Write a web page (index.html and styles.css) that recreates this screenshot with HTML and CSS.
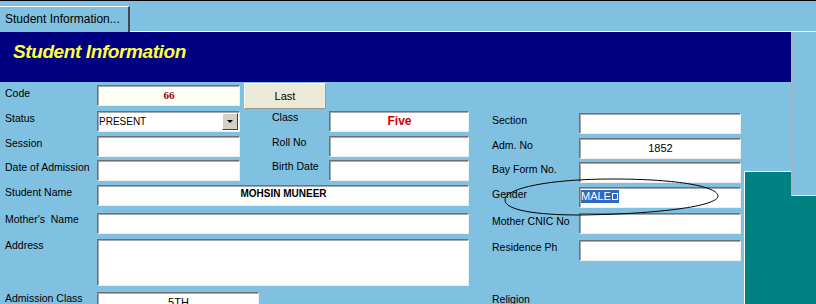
FILE: index.html
```html
<!DOCTYPE html>
<html lang="en">
<head>
    <meta charset="UTF-8">
    <title>Student Information</title>
    <link rel="stylesheet" href="styles.css">
</head>
<body>
    <div class="tabbar">
        <div class="tab">Student Information...</div>
        <div class="tabline"></div>
    </div>

    <div class="page">
        <div class="header">
            <h1>Student Information</h1>
        </div>

        <div class="form">
            <!-- row 1 -->
            <div class="lbl first">Code</div>
            <div class="field code">66</div>
            <button class="btn">Last</button>

            <!-- row 2 -->
            <div class="lbl">Status</div>
            <div class="field combo">PRESENT<span class="drop"></span></div>
            <div class="lbl mid">Class</div>
            <div class="field c5 class-val">Five</div>
            <div class="lbl c7 right">Section</div>
            <div class="field c8 right"></div>

            <!-- row 3 -->
            <div class="lbl">Session</div>
            <div class="field"></div>
            <div class="lbl mid">Roll No</div>
            <div class="field c5"></div>
            <div class="lbl c7 right">Adm. No</div>
            <div class="field c8 right num">1852</div>

            <!-- row 4 -->
            <div class="lbl">Date of Admission</div>
            <div class="field"></div>
            <div class="lbl mid">Birth Date</div>
            <div class="field c5"></div>
            <div class="lbl c7 right">Bay Form No.</div>
            <div class="field c8 right"></div>

            <!-- row 5 -->
            <div class="lbl">Student Name</div>
            <div class="field wide name">MOHSIN MUNEER</div>
            <div class="lbl c7 right">Gender</div>
            <div class="field c8 right gender"><span class="sel">MALE<span class="cr"></span></span></div>

            <!-- row 6 -->
            <div class="lbl">Mother's &nbsp;Name</div>
            <div class="field wide low"></div>
            <div class="lbl c7 right">Mother CNIC No</div>
            <div class="field c8 low"></div>

            <!-- row 7 -->
            <div class="lbl">Address</div>
            <div class="field wide address"></div>
            <div class="lbl c7 right">Residence Ph</div>
            <div class="field c8 right"></div>

            <!-- row 8 -->
            <div class="lbl">Admission Class</div>
            <div class="field adm-class num">5TH</div>
            <div class="lbl c7">Religion</div>
        </div>
    </div>

    <div class="teal"></div>
    <div class="strip"></div>

    <svg class="circle" width="224" height="46" viewBox="0 0 224 46">
        <path d="M5,26 C5,14 50,5 113,5 C180,5 218,13 218,22 C218,32 160,40 80,41 C35,41 5,36 5,26 Z"
              fill="none" stroke="#000" stroke-width="1"/>
    </svg>
</body>
</html>
```

FILE: styles.css
```css
body {
    margin: 0;
    width: 816px;
    height: 304px;
    overflow: hidden;
    position: relative;
    background-color: #80c0e0;
    font-family: "Liberation Sans", Arial, sans-serif;
}
.tabbar {
    display: flex;
    align-items: flex-end;
    height: 31px;
    border-top: 1px solid #000;
}
.tab {
    box-sizing: border-box;
    width: 130px;
    height: 26px;
    padding: 5px 0 0 5px;
    border-top: 1px solid #fff;
    border-right: 2px solid #404850;
    font-size: 12px;
    line-height: 14px;
    color: #000;
}
.tabline {
    flex: 1;
    height: 1px;
    background-color: #fff;
}
.header {
    box-sizing: border-box;
    width: 791px;
    height: 50px;
    padding: 9px 0 0 13px;
    background-color: #000080;
}
h1 {
    margin: 0;
    font-size: 19px;
    line-height: 22px;
    font-weight: bold;
    font-style: italic;
    letter-spacing: -0.4px;
    color: #ffff3c;
}
.form {
    display: grid;
    grid-template-columns: 92px 143px 4px 85px 140px 23px 87px 162px;
    grid-template-rows: 28px 25px 24px 25px 27px 26px 53px auto;
    padding-left: 5px;
    align-items: start;
}
.lbl {
    grid-column: 1;
    margin-top: 2px;
    font-size: 10.5px;
    line-height: 12px;
    color: #000;
    white-space: nowrap;
}
.lbl.first {
    margin-top: 5px;
}
.lbl.mid {
    grid-column: 4;
    padding-left: 28px;
    margin-top: 1px;
}
.lbl.c7 {
    grid-column: 7;
    margin-top: 3px;
}
.lbl.c7.right {
    margin-top: 4px;
}
.field {
    grid-column: 2;
    position: relative;
    box-sizing: border-box;
    height: 21px;
    margin-top: 1px;
    padding-left: 1px;
    background-color: #fff;
    border-top: 1px solid #707070;
    border-left: 1px solid #707070;
    border-right: 1px solid #eeeeee;
    border-bottom: 1px solid #eeeeee;
    box-shadow: inset 1px 1px 0 #a8a8a8;
    font-size: 10px;
    line-height: 19px;
    color: #000;
    white-space: nowrap;
}
.field.c5 {
    grid-column: 5;
}
.field.c8 {
    grid-column: 8;
}
.field.right {
    margin-top: 3px;
}
.field.low {
    margin-top: 2px;
}
.field.wide {
    grid-column: 2 / 6;
}
.code {
    margin-top: 3px;
    background-color: #fffff6;
    text-align: center;
    font-family: "Liberation Serif", "Times New Roman", serif;
    font-weight: bold;
    font-size: 11px;
    color: #990000;
}
.class-val {
    text-align: center;
    font-weight: bold;
    font-size: 12px;
    color: #cc0000;
}
.num {
    text-align: center;
    font-size: 11px;
}
.name {
    text-align: center;
    font-weight: bold;
    line-height: 15px;
}
.address {
    height: 47px;
    margin-top: 2px;
}
.adm-class {
    width: 162px;
    grid-column: 2 / 5;
    margin-top: 2px;
}
.gender {
    line-height: 13px;
    padding-top: 2px;
    font-size: 11px;
}
.sel {
    display: inline-block;
    padding: 0 1px 0 0;
    background-color: #3168c6;
    color: #fff;
}
.cr {
    display: inline-block;
    box-sizing: border-box;
    width: 6px;
    height: 7px;
    margin-left: 1px;
    border: 1px solid #fff;
}
.combo {
    padding-right: 18px;
}
.drop {
    position: absolute;
    right: 1px;
    top: 1px;
    box-sizing: border-box;
    width: 16px;
    height: 17px;
    background-color: #d4d0c8;
    border-top: 1px solid #fff;
    border-left: 1px solid #fff;
    border-right: 1px solid #404040;
    border-bottom: 1px solid #404040;
}
.drop::after {
    content: "";
    position: absolute;
    left: 4px;
    top: 6px;
    border-left: 3px solid transparent;
    border-right: 3px solid transparent;
    border-top: 3px solid #000;
}
.btn {
    grid-column: 4;
    box-sizing: border-box;
    width: 82px;
    height: 26px;
    margin-top: 1px;
    padding: 0;
    background-color: #ece9d8;
    border-top: 1px solid #fff;
    border-left: 1px solid #fff;
    border-right: 1px solid #9c9a90;
    border-bottom: 1px solid #9c9a90;
    font-family: "Liberation Sans", Arial, sans-serif;
    font-size: 11px;
    color: #000;
}
.teal {
    position: absolute;
    left: 744px;
    top: 171px;
    width: 72px;
    height: 133px;
    background-color: #008080;
    border-top: 1px solid #fff;
    border-left: 1px solid #fff;
}
.strip {
    position: absolute;
    left: 791px;
    top: 32px;
    width: 25px;
    height: 163px;
    background-color: #80c0e0;
    border-left: 2px solid #a4b6c2;
    border-bottom: 1px solid #fff;
}
.circle {
    position: absolute;
    left: 500px;
    top: 174px;
}
```
